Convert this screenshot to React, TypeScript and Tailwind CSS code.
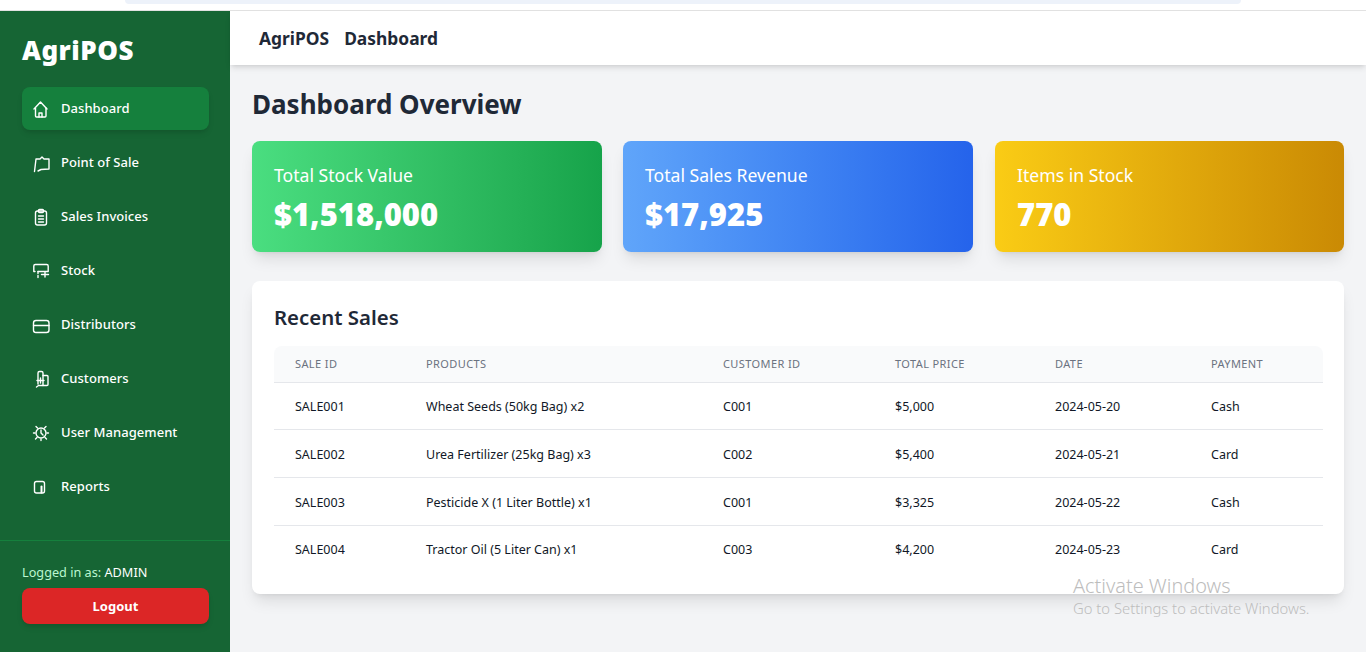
import React from "react";

const FONT = "font-['Noto_Sans','Open_Sans',sans-serif]";

function Icon({ children }: { children: React.ReactNode }) {
  return (
    <svg
      viewBox="0 0 20 20"
      fill="none"
      stroke="currentColor"
      strokeWidth="1.4"
      strokeLinecap="round"
      strokeLinejoin="round"
      className="w-5 h-5 shrink-0"
    >
      {children}
    </svg>
  );
}

const NAV = [
  {
    label: "Dashboard",
    active: true,
    icon: (
      <>
        <path d="M3 10L9.5 3L16 10" />
        <path d="M4.5 9V17a1 1 0 0 0 1 1H14a1 1 0 0 0 1-1V9" />
        <path d="M8 18v-4h3v4" />
      </>
    ),
  },
  {
    label: "Point of Sale",
    icon: <path d="M5 6L3.5 18.5M5 6H9L11 4L13 6H18V16L10 16.5L7 18" />,
  },
  {
    label: "Sales Invoices",
    icon: (
      <>
        <rect x="4.5" y="4" width="11" height="14" rx="2" />
        <rect x="7.5" y="2.5" width="5" height="3" rx="1" />
        <path d="M7.5 9h5M7.5 12h5M7.5 15h5" />
      </>
    ),
  },
  {
    label: "Stock",
    icon: (
      <>
        <path d="M4 10.5H2.8V5a1.5 1.5 0 0 1 1.5-1.5h11.4A1.5 1.5 0 0 1 17.2 5v5.5H7" />
        <path d="M7 10.5v7.5" strokeDasharray="2 2" />
        <path d="M10.5 13.5h7M14 11v5" />
      </>
    ),
  },
  {
    label: "Distributors",
    icon: (
      <>
        <rect x="2.5" y="5.5" width="15.5" height="12" rx="2.5" />
        <path d="M2.5 10.5h15.5" />
      </>
    ),
  },
  {
    label: "Customers",
    icon: (
      <>
        <path d="M7 15V4a1.5 1.5 0 0 1 1.5-1.5h2A1.5 1.5 0 0 1 12 4v12.5H7.5L5.5 18" />
        <path d="M12 6.5h4a1 1 0 0 1 1 1v8a1 1 0 0 1-1 1h-4" />
        <path d="M6 11.5h7M9.5 9v5" />
      </>
    ),
  },
  {
    label: "User Management",
    icon: (
      <>
        <circle cx="10" cy="10" r="5" />
        <path d="M10 7v3l2 2" />
        <path d="M5 3.5l1.5 1.5M15 3.5L13.5 5M2.5 10h1.5M16 10h1.5M4.5 16l1.5-1.5M15.5 16L14 14.5M10 16v1.5" />
      </>
    ),
  },
  {
    label: "Reports",
    icon: (
      <>
        <rect x="3.5" y="4.5" width="10" height="11.5" rx="2" />
        <path d="M10.5 9.5v6" strokeWidth="2" />
      </>
    ),
  },
];

const CARDS = [
  { title: "Total Stock Value", value: "$1,518,000", bg: "from-[#4ade80] to-[#16a34a]", shift: "" },
  { title: "Total Sales Revenue", value: "$17,925", bg: "from-[#60a5fa] to-[#2563eb]", shift: "" },
  { title: "Items in Stock", value: "770", bg: "from-[#facc15] to-[#ca8a04]", shift: "ml-px" },
];

const SALES = [
  ["SALE001", "Wheat Seeds (50kg Bag) x2", "C001", "$5,000", "2024-05-20", "Cash"],
  ["SALE002", "Urea Fertilizer (25kg Bag) x3", "C002", "$5,400", "2024-05-21", "Card"],
  ["SALE003", "Pesticide X (1 Liter Bottle) x1", "C001", "$3,325", "2024-05-22", "Cash"],
  ["SALE004", "Tractor Oil (5 Liter Can) x1", "C003", "$4,200", "2024-05-23", "Card"],
];

const HEADERS = ["Sale ID", "Products", "Customer ID", "Total Price", "Date", "Payment"];
const COL_WIDTHS = ["w-[131px]", "w-[297px]", "w-[172px]", "w-[160px]", "w-[156px]", "w-[133px]"];

export default function App() {
  return (
    <div className={`${FONT} relative h-screen overflow-hidden flex flex-col bg-[#f3f4f6]`}>
      {/* sliver of the browser bar above the page */}
      <div className="h-[11px] shrink-0 bg-white border-b border-[#e2e2e2]">
        <div className="ml-[125px] w-[1116px] h-[4px] bg-[#edf2fa] rounded-b-xl" />
      </div>

      <div className="flex flex-1 min-h-0">
        {/* Sidebar */}
        <aside className="w-[230px] shrink-0 bg-[#166534] text-white flex flex-col">
          <div className="px-[22px] pt-[20px] text-[26px] leading-[38px] font-black tracking-[0.5px]">AgriPOS</div>
          <nav className="pl-[22px] pr-[21px] mt-[18px] flex flex-col gap-[11px]">
            {NAV.map((item) => (
              <div
                key={item.label}
                className={`h-[43px] rounded-lg pl-[9px] flex items-center gap-[10px] text-[13px] font-medium tracking-[0.05px] ${
                  item.active ? "bg-[#15803d] shadow-md" : ""
                }`}
              >
                <Icon>{item.icon}</Icon>
                {item.label}
              </div>
            ))}
          </nav>
          <div className="mt-auto border-t border-[#15803d] pl-[22px] pr-[21px] pt-[22px] pb-[28px]">
            <p className="text-[12.7px] leading-[18px] text-[#bbf7d0]">
              Logged in as: <span className="text-white">ADMIN</span>
            </p>
            <button className="mt-[7px] w-full h-[36px] pt-[1px] rounded-lg bg-[#dc2626] text-white text-[13px] font-bold shadow-md">
              Logout
            </button>
          </div>
        </aside>

        {/* Main */}
        <div className="flex-1 min-w-0 flex flex-col">
          <header className="h-[54px] shrink-0 bg-white shadow-md flex items-center gap-[15px] pl-[29px] pt-[1px] text-[17.4px] font-bold text-[#1f2937]">
            <span>AgriPOS</span>
            <span>Dashboard</span>
          </header>

          <main className="px-[22px] pt-[20px]">
            <h1 className="text-[26px] leading-[39px] font-bold text-[#1f2937]">Dashboard Overview</h1>

            <div className="mt-[17px] grid grid-cols-[350px_350px_350px] gap-[21px]">
              {CARDS.map((card) => (
                <div
                  key={card.title}
                  className={`h-[111px] rounded-lg bg-linear-to-r ${card.bg} ${card.shift} px-[22px] pt-[22px] text-white shadow-lg`}
                >
                  <p className="text-[17.6px] leading-[24px]">{card.title}</p>
                  <p className="mt-[5px] text-[31px] leading-[45px] font-black">{card.value}</p>
                </div>
              ))}
            </div>

            <section className="mt-[29px] h-[313px] rounded-lg bg-white shadow-lg px-[22px] pt-[20px]">
              <h2 className="text-[20.4px] leading-[32px] font-semibold text-[#1f2937]">Recent Sales</h2>
              <table className="mt-[13px] w-[1049px] table-fixed border-collapse">
                <colgroup>
                  {COL_WIDTHS.map((w) => (
                    <col key={w} className={w} />
                  ))}
                </colgroup>
                <thead>
                  <tr className="h-[36px] border-b border-[#e5e7eb]">
                    {HEADERS.map((h, i) => (
                      <th
                        key={h}
                        className={`bg-[#f9fafb] pl-[21px] text-left text-[11px] font-normal uppercase tracking-[0.4px] text-[#6b7280] ${
                          i === 0 ? "rounded-tl-lg" : ""
                        } ${i === 5 ? "rounded-tr-lg" : ""}`}
                      >
                        {h}
                      </th>
                    ))}
                  </tr>
                </thead>
                <tbody>
                  {SALES.map((row, r) => (
                    <tr key={row[0]} className={`h-[47.7px] ${r < 3 ? "border-b border-[#e5e7eb]" : ""}`}>
                      {row.map((cell, i) => (
                        <td
                          key={i}
                          className={`pl-[21px] text-[12.5px] text-[#111827] whitespace-nowrap ${r < 3 ? "pt-[4px]" : "pt-[2px]"}`}
                        >
                          {cell}
                        </td>
                      ))}
                    </tr>
                  ))}
                </tbody>
              </table>
            </section>
          </main>
        </div>
      </div>

      {/* Windows watermark sits over the page */}
      <div className="absolute left-[1073px] top-[573px] text-[#bdbdbd] pointer-events-none">
        <p className="text-[19.9px] leading-[25px] font-light">Activate Windows</p>
        <p className="text-[14.8px] leading-[20px] font-light">Go to Settings to activate Windows.</p>
      </div>
    </div>
  );
}
